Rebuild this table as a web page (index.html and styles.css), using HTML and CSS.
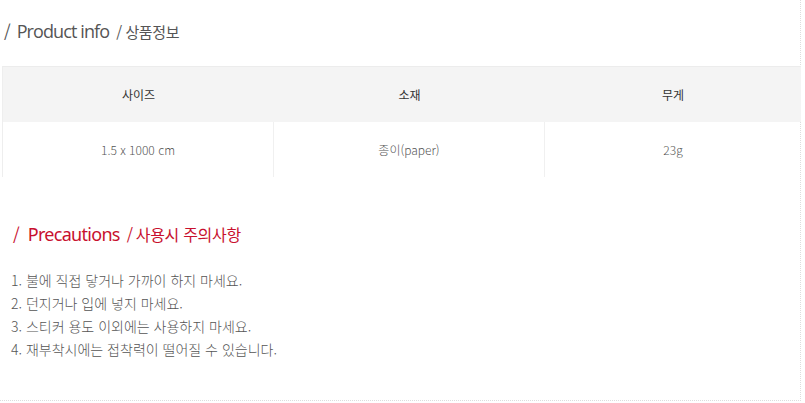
FILE: index.html
```html
<!DOCTYPE html>
<html lang="ko">
<head>
<meta charset="utf-8">
<link rel="stylesheet" href="styles.css">
</head>
<body>
<div class="page">
  <h2 class="title"><span class="slash">/</span><span class="en">Product info</span><span class="ko">/ 상품정보</span></h2>
  <div class="table">
    <div class="th">사이즈</div>
    <div class="th">소재</div>
    <div class="th">무게</div>
    <div class="td">1.5 x 1000 cm</div>
    <div class="td">종이(paper)</div>
    <div class="td">23g</div>
  </div>
  <h2 class="title red"><span class="slash">/</span><span class="en">Precautions</span><span class="ko"><span class="ks">/</span>사용시 주의사항</span></h2>
  <ol class="list">
    <li>1. 불에 직접 닿거나 가까이 하지 마세요.</li>
    <li>2. 던지거나 입에 넣지 마세요.</li>
    <li>3. 스티커 용도 이외에는 사용하지 마세요.</li>
    <li>4. 재부착시에는 접착력이 떨어질 수 있습니다.</li>
  </ol>
</div>
</body>
</html>
```
FILE: styles.css
```css
html, body {
  margin: 0;
  padding: 0;
  background: #fff;
}
body {
  font-family: "Noto Sans CJK KR", "Noto Sans", sans-serif;
  color: #555;
}
.page {
  width: 801px;
  height: 401px;
  border-right: 1px dotted #ddd;
  border-bottom: 1px dotted #ddd;
  box-sizing: border-box;
}
.title {
  margin: 0;
  padding: 18px 0 0 4px;
  height: 47px;
  box-sizing: border-box;
  font-weight: 400;
  display: flex;
  align-items: baseline;
  color: #555;
}
.title .slash {
  font-size: 17px;
  margin-right: 6px;
}
.title .en {
  font-family: "Open Sans", sans-serif;
  font-size: 18px;
  letter-spacing: -0.9px;
  margin-right: 7px;
}
.title .ko {
  font-size: 15px;
  letter-spacing: -0.4px;
}
.table {
  margin-top: 19px;
  margin-left: 2px;
  width: 798px;
  display: grid;
  grid-template-columns: 271px 271px 1fr;
  border-top: 1px solid #ececec;
  border-left: 1px solid #eeeeee;
}
.th {
  background: #f4f4f4;
  height: 55px;
  display: flex;
  align-items: center;
  justify-content: center;
  font-size: 12px;
  font-weight: 400;
  color: #333;
}
.td {
  height: 55px;
  display: flex;
  align-items: center;
  justify-content: center;
  font-size: 12px;
  font-weight: 300;
  color: #555;
  border-right: 1px solid #f0f0f0;
}
.td:last-child {
  border-right: none;
}
.title.red {
  color: #c8102e;
  padding: 44px 0 0 13px;
  height: 77px;
}
.title.red .en {
  font-family: "Noto Sans", sans-serif;
  font-size: 18px;
  letter-spacing: -0.7px;
  margin-right: 7px;
}
.title.red .slash {
  margin-right: 8px;
}
.title.red .ko {
  font-size: 16px;
  letter-spacing: -0.3px;
}
.title.red .ks {
  margin-right: 3px;
}
.list {
  list-style: none;
  margin: 0;
  padding: 15px 0 0 11px;
  font-size: 14px;
  font-weight: 300;
  line-height: 23px;
  color: #555;
}
```
